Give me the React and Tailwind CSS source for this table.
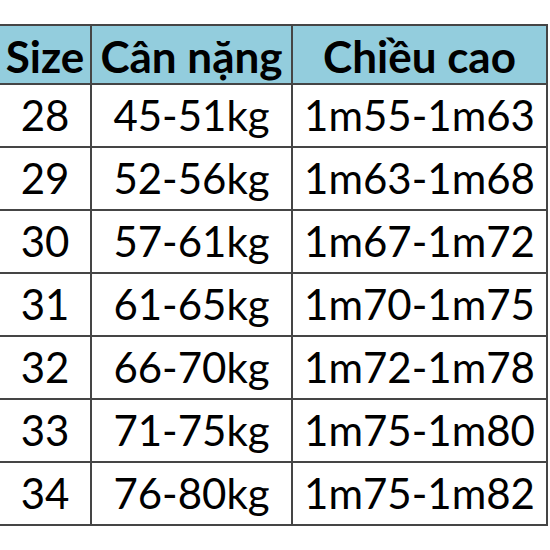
export default function App() {
  const rows = [
    ["28", "45-51kg", "1m55-1m63"],
    ["29", "52-56kg", "1m63-1m68"],
    ["30", "57-61kg", "1m67-1m72"],
    ["31", "61-65kg", "1m70-1m75"],
    ["32", "66-70kg", "1m72-1m78"],
    ["33", "71-75kg", "1m75-1m80"],
    ["34", "76-80kg", "1m75-1m82"],
  ];
  return (
    <div className="w-[550px] h-[550px] bg-white pt-[24px]" style={{ fontFamily: "Lato, 'Noto Sans', sans-serif" }}>
      <div className="w-[548px] border-t-2 border-r-2 border-[#454545] grid grid-cols-[92px_201px_253px] text-black">
        <div className="h-[59px] bg-[#93cddd] border-b-2 border-r-2 border-[#454545] flex items-center justify-center font-bold text-[44px] pt-[2px]">Size</div>
        <div className="h-[59px] bg-[#93cddd] border-b-2 border-r-2 border-[#454545] flex items-center justify-center font-bold text-[44px] pt-[2px]">Cân nặng</div>
        <div className="h-[59px] bg-[#93cddd] border-b-2 border-[#454545] flex items-center justify-center font-bold text-[44px] pt-[2px]">Chiều cao</div>
        {rows.map((r, i) => (
          <div key={i} className="contents">
            <div className="h-[63px] border-b-2 border-r-2 border-[#454545] flex items-center justify-center text-[42px]">{r[0]}</div>
            <div className="h-[63px] border-b-2 border-r-2 border-[#454545] flex items-center justify-center text-[42px]">{r[1]}</div>
            <div className="h-[63px] border-b-2 border-[#454545] flex items-center justify-center text-[42px]">{r[2]}</div>
          </div>
        ))}
      </div>
    </div>
  );
}
